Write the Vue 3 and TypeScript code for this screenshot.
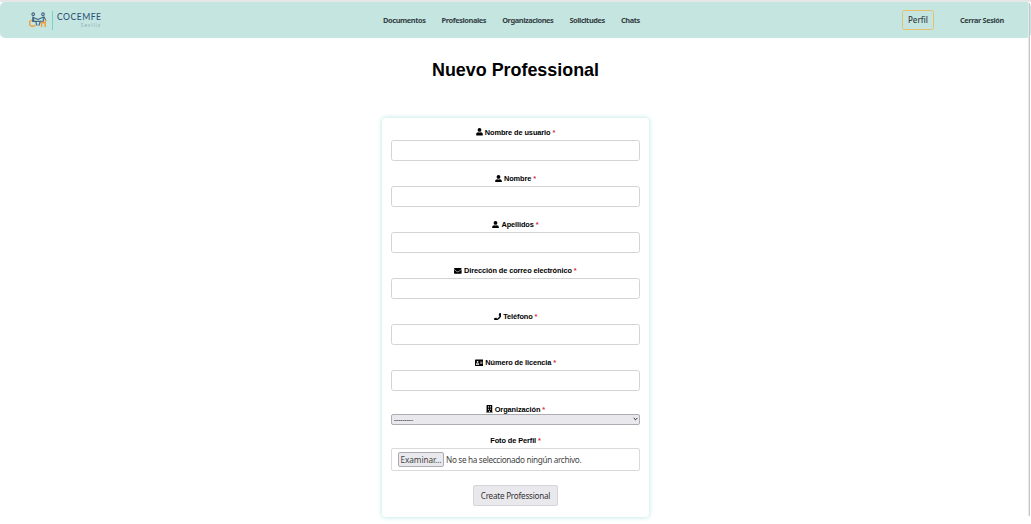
<script setup lang="ts">
type IconName = 'user' | 'mail' | 'phone' | 'card' | 'building'

interface Field {
  id: string
  label: string
  icon: IconName
}

interface Icon {
  box: string
  width: number
  path: string
}

const icons: Record<IconName, Icon> = {
  user: {
    box: '0 0 448 512',
    width: 7,
    path: 'M224 256A128 128 0 1 0 224 0a128 128 0 0 0 0 256zm90 32h-17a174 174 0 0 1-146 0h-17C60 288 0 348 0 422v42c0 27 21 48 48 48h352c27 0 48-21 48-48v-42c0-74-60-134-134-134z',
  },
  mail: {
    box: '0 0 512 512',
    width: 7.6,
    path: 'M502 191c4-3 10 0 10 5v204c0 27-21 48-48 48H48c-27 0-48-21-48-48V196c0-5 6-8 10-5 22 17 52 40 155 114 21 16 57 48 91 48s71-33 91-48c103-74 133-97 155-114zM256 320c23 1 57-29 74-41 133-97 143-105 174-129 5-5 8-11 8-18v-20c0-27-21-48-48-48H48c-27 0-48 21-48 48v20c0 7 3 13 8 18 31 24 41 32 174 129 17 12 51 42 74 41z',
  },
  phone: {
    box: '0 0 512 512',
    width: 7.6,
    path: 'M493 25L389 1c-11-3-23 3-28 14l-48 112c-4 10-1 21 7 28l61 50a371 371 0 0 1-176 176l-50-61c-7-8-18-11-28-7L15 361c-11 5-17 17-14 28l24 104c3 11 12 19 24 19 256 0 463-207 463-463 0-12-8-21-19-24z',
  },
  card: {
    box: '0 0 576 512',
    width: 8.4,
    path: 'M528 32H48C21 32 0 53 0 80v352c0 27 21 48 48 48h480c27 0 48-21 48-48V80c0-27-21-48-48-48zM176 128a64 64 0 1 1 0 128 64 64 0 0 1 0-128zm112 237c0 10-10 19-22 19H86c-12 0-22-9-22-19v-19c0-32 30-58 67-58h5a103 103 0 0 0 80 0h5c37 0 67 26 67 58v19zm224-53c0 4-4 8-8 8H360c-4 0-8-4-8-8v-16c0-4 4-8 8-8h144c4 0 8 4 8 8v16zm0-64c0 4-4 8-8 8H360c-4 0-8-4-8-8v-16c0-4 4-8 8-8h144c4 0 8 4 8 8v16zm0-64c0 4-4 8-8 8H360c-4 0-8-4-8-8v-16c0-4 4-8 8-8h144c4 0 8 4 8 8v16z',
  },
  building: {
    box: '0 0 448 512',
    width: 6.8,
    path: 'M436 480h-20V24c0-13-11-24-24-24H56C43 0 32 11 32 24v456H12c-7 0-12 5-12 12v20h448v-20c0-7-5-12-12-12zM128 76h64v52h-64zm0 96h64v52h-64zm0 96h64v52h-64zm128 212h-64v-84h64zm64-160h-64v-52h64zm0-96h-64v-52h64zm0-96h-64V76h64z',
  },
}

const links: string[] = ['Documentos', 'Profesionales', 'Organizaciones', 'Solicitudes', 'Chats']

const fields: Field[] = [
  { id: 'username', label: 'Nombre de usuario', icon: 'user' },
  { id: 'first', label: 'Nombre', icon: 'user' },
  { id: 'last', label: 'Apellidos', icon: 'user' },
  { id: 'email', label: 'Dirección de correo electrónico', icon: 'mail' },
  { id: 'phone', label: 'Teléfono', icon: 'phone' },
  { id: 'license', label: 'Número de licencia', icon: 'card' },
]
</script>

<template>
  <div class="page">
    <header class="bar">
      <div class="brand">
        <svg class="logo" viewBox="0 0 18 16" fill="none" stroke-linecap="round" stroke-linejoin="round">
          <g stroke="#456683" stroke-width="1.1">
            <circle cx="4.2" cy="2.2" r="1.3" />
            <circle cx="14" cy="2.2" r="1.3" />
            <path d="M3.8 4.8L3.6 9.4H6.6L8 13.2M4.6 5.4L8.8 7.4L13.4 5.4M4.6 6L4.8 9M14.2 4.8L14.4 9.2H11.4L10 13.2M15.2 5L16.8 8.6M7 9.4H11" />
          </g>
          <path d="M2.4 8.4A3.1 3.1 0 1 0 6 13.2M12.6 14.4V10.8H16.2V14.6M16.4 10.6V8.6" stroke="#f0a03c" stroke-width="1.5" />
        </svg>
        <span class="rule"></span>
        <div class="brand-text">
          <span class="brand-name">COCEMFE</span>
          <span class="brand-city">Sevilla</span>
        </div>
      </div>
      <nav class="links">
        <a v-for="link in links" :key="link">{{ link }}</a>
      </nav>
      <div class="account">
        <a class="profile">Perfil</a>
        <a class="logout">Cerrar Sesión</a>
      </div>
    </header>

    <div class="scroll-track"></div>

    <main>
      <h1>Nuevo Professional</h1>
      <form class="card" @submit.prevent>
        <div v-for="field in fields" :key="field.id" class="field">
          <label :for="field.id">
            <svg :viewBox="icons[field.icon].box" :width="icons[field.icon].width" height="7.6">
              <path :d="icons[field.icon].path" fill-rule="evenodd" />
            </svg>
            <span>{{ field.label }} <i>*</i></span>
          </label>
          <input :id="field.id" type="text" />
        </div>
        <div class="field organization">
          <label>
            <svg :viewBox="icons.building.box" :width="icons.building.width" height="7.6">
              <path :d="icons.building.path" fill-rule="evenodd" />
            </svg>
            <span>Organización <i>*</i></span>
          </label>
          <div class="select">
            <span>---------</span>
            <svg viewBox="0 0 5 4" width="5" height="4"><path d="M.7 1L2.5 2.8L4.3 1" fill="none" stroke="#222" stroke-width="1" /></svg>
          </div>
        </div>
        <div class="field photo">
          <label><span>Foto de Perfil <i>*</i></span></label>
          <div class="file">
            <span class="browse">Examinar…</span>
            <span class="file-name">No se ha seleccionado ningún archivo.</span>
          </div>
        </div>
        <button type="submit">Create Professional</button>
      </form>
    </main>
  </div>
</template>

<style>
body {
  margin: 0;
  background: #fff;
  overflow: hidden;
}
</style>

<style scoped>
.page {
  position: relative;
  box-sizing: border-box;
  width: 1031px;
  height: 524px;
  border-top: 2px solid #e6e6e6;
  font-family: "Noto Sans", "Open Sans", sans-serif;
  background: #fff;
  overflow: hidden;
}
.bar {
  box-sizing: border-box;
  display: grid;
  grid-template-columns: 383px 1fr auto;
  align-items: center;
  height: 36px;
  padding-right: 27px;
  border-radius: 5px;
  background: #c5e5e1;
  color: #333f43;
}
.brand {
  display: flex;
  align-items: center;
  padding-left: 29px;
}
.logo {
  width: 18px;
  height: 16px;
}
.rule {
  width: 1px;
  height: 19px;
  margin: 0 4px 0 5px;
  background: #7dcfc9;
}
.brand-text {
  display: flex;
  flex-direction: column;
  width: 44px;
}
.brand-name {
  font: 500 8.6px/10px Lato, sans-serif;
  letter-spacing: 0.5px;
  color: #2d5676;
}
.brand-city {
  align-self: flex-end;
  font: 5px/7px Lato, sans-serif;
  letter-spacing: 0.9px;
  color: #8fb0b8;
}
.links {
  display: flex;
  gap: 16px;
  padding-bottom: 1px;
  font-size: 7.4px;
  font-weight: 700;
  letter-spacing: -0.4px;
  line-height: 10px;
}
.account {
  display: flex;
  align-items: center;
  gap: 26px;
}
.profile {
  box-sizing: border-box;
  width: 32px;
  height: 20px;
  border: 1.5px solid #e6c06a;
  border-radius: 2.5px;
  font-size: 8px;
  font-weight: 500;
  line-height: 18px;
  text-align: center;
}
.logout {
  padding-bottom: 1px;
  font-size: 7.3px;
  font-weight: 700;
  letter-spacing: -0.34px;
  line-height: 10px;
}
.scroll-track {
  position: absolute;
  top: 1px;
  right: 1px;
  width: 1px;
  height: 513px;
  background: #c6c6c6;
  border-left: 1px solid #e8e8e8;
}
main {
  display: flex;
  flex-direction: column;
  align-items: center;
}
h1 {
  margin: 21px 0 37px;
  font: bold 17.9px/22px "Liberation Sans", Arial, sans-serif;
  color: #000;
}
.card {
  box-sizing: border-box;
  display: flex;
  flex-direction: column;
  align-items: center;
  width: 267px;
  height: 399px;
  padding: 9px 9px 0 9px;
  border-radius: 4px;
  background: #fff;
  box-shadow: 0 0 4px 1px #c9eeea;
}
.field {
  flex: none;
  width: 249px;
  height: 46.1px;
}
label {
  display: flex;
  align-items: center;
  justify-content: center;
  gap: 2px;
  height: 11px;
  font: bold 7.4px/11px "Liberation Sans", Arial, sans-serif;
  letter-spacing: -0.1px;
  color: #000;
}
label svg {
  flex: none;
  margin-bottom: 0.6px;
}
i {
  color: #e02b3c;
  font-style: normal;
}
input {
  box-sizing: border-box;
  display: block;
  width: 249px;
  height: 21px;
  margin: 1.5px 0 0;
  padding: 4px;
  border: 1px solid #d4d4d4;
  border-radius: 2.5px;
  background: #fff;
  outline: none;
}
.organization {
  height: 31.5px;
}
.select {
  box-sizing: border-box;
  display: flex;
  align-items: center;
  justify-content: space-between;
  height: 11px;
  margin-top: -0.7px;
  padding: 0 1px 0 2px;
  border: 1px solid #acacb3;
  border-radius: 2px;
  background: #e9e9ed;
  font-size: 6.6px;
  line-height: 9px;
  color: #000;
}
.photo {
  height: 50px;
}
.file {
  box-sizing: border-box;
  display: flex;
  align-items: center;
  gap: 2px;
  height: 23px;
  margin-top: 2px;
  padding: 0 0 1px 6px;
  border: 1px solid #dadada;
  border-radius: 2px;
  font-size: 8.2px;
  letter-spacing: -0.33px;
  color: #444;
  white-space: nowrap;
}
.browse {
  box-sizing: border-box;
  width: 46px;
  height: 15px;
  border: 1px solid #aaaab2;
  border-radius: 2px;
  background: #e9e9ed;
  letter-spacing: -0.06px;
  line-height: 13px;
  text-align: center;
}
button {
  box-sizing: border-box;
  width: 85px;
  height: 21px;
  flex: none;
  padding: 0;
  border: 1px solid #d5d5d9;
  border-radius: 2px;
  background: #e9e9ed;
  font: 8.1px/19px "Noto Sans", "Open Sans", sans-serif;
  letter-spacing: -0.22px;
  color: #333;
  white-space: nowrap;
}
</style>
